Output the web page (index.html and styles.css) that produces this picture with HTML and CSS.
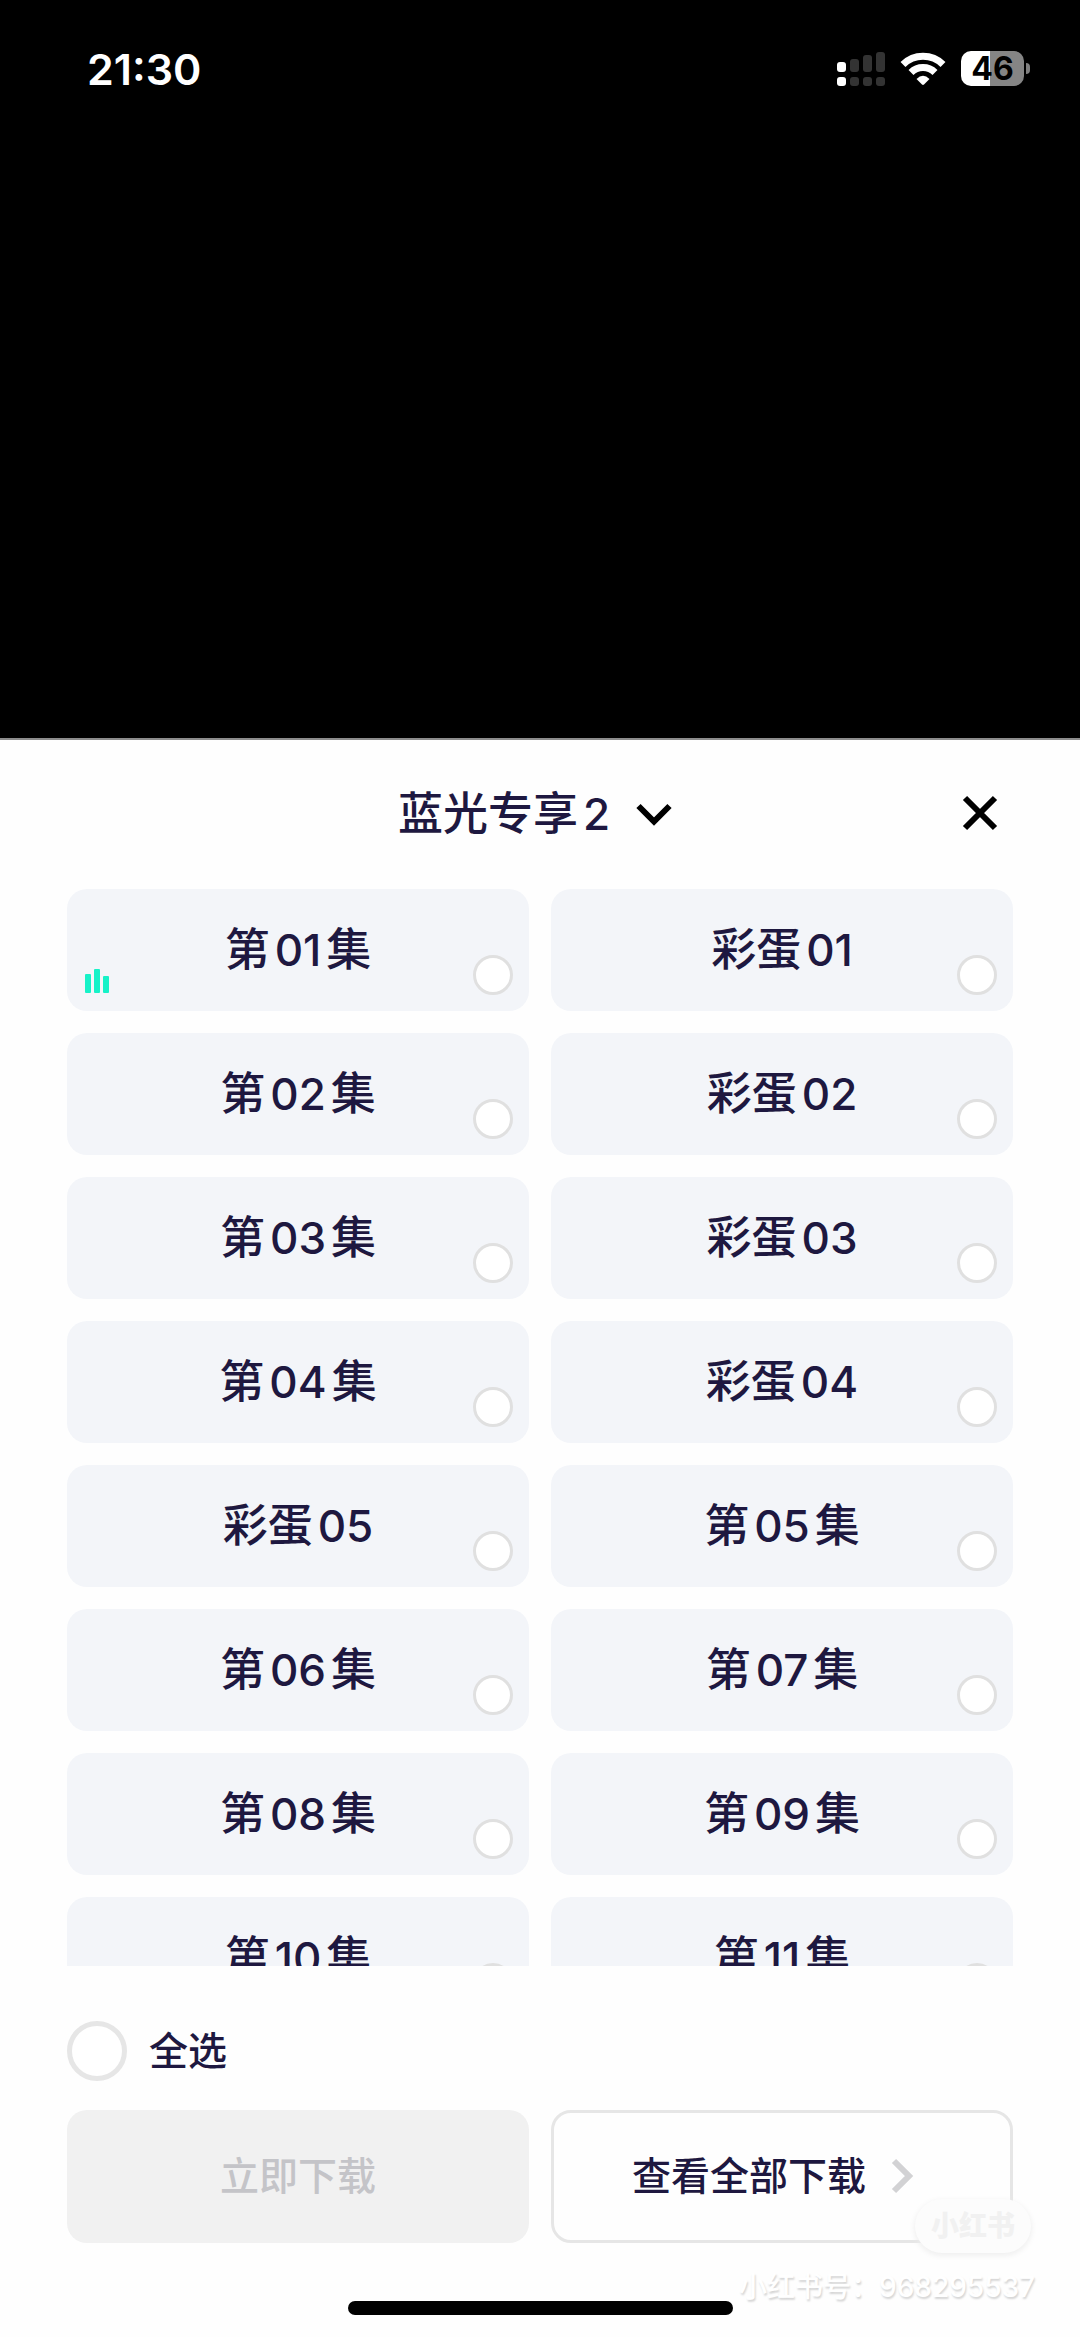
FILE: index.html
```html
<!DOCTYPE html>
<html lang="zh-CN">
<head>
<meta charset="utf-8">
<meta name="viewport" content="width=device-width, initial-scale=1">
<title>下载选集</title>
<link rel="stylesheet" href="styles.css">
</head>
<body>
<header class="status-bar">
  <time class="clock">21:30</time>
  <div class="indicators">
    <svg class="signal" viewBox="0 0 48 36" aria-hidden="true">
      <g fill="#fff"><rect x="0" y="11" width="9" height="10" rx="3"/><rect x="0" y="26" width="9" height="9" rx="3"/></g>
      <g fill="#333"><rect x="13" y="8" width="9" height="13" rx="3"/><rect x="26" y="4" width="9" height="17" rx="3"/><rect x="39" y="1" width="9" height="20" rx="3"/><rect x="13" y="26" width="9" height="9" rx="3"/><rect x="26" y="26" width="9" height="9" rx="3"/><rect x="39" y="26" width="9" height="9" rx="3"/></g>
    </svg>
    <svg class="wifi" viewBox="0 0 46 36" aria-hidden="true">
      <g fill="none" stroke="#fff" stroke-width="7">
        <path d="M3 13.5 A28.500 28.500 0 0 1 43 13.500"/>
        <path d="M11 21.500 A17 17 0 0 1 35 21.500"/>
      </g>
      <path d="M16.500 28 Q23 21.500 29.500 28 L24 33.600 Q23 34.500 22 33.600 Z" fill="#fff"/>
    </svg>
    <div class="battery"><span class="battery-level">46</span></div>
  </div>
</header>
<div class="player"></div>
<main class="sheet">
  <div class="sheet-head">
    <button class="source" type="button">
      <span>蓝光专享<span class="num num-last">2</span></span>
      <svg class="icon" viewBox="0 0 48 48" aria-hidden="true"><path d="M8.500 16 L24 31.500 L39.500 16" fill="none" stroke="#000" stroke-width="6"/></svg>
    </button>
    <button class="close" type="button" aria-label="关闭">
      <svg class="icon" viewBox="0 0 48 48" aria-hidden="true"><path d="M9 8 L39 38 M39 8 L9 38" fill="none" stroke="#000" stroke-width="6"/></svg>
    </button>
  </div>
  <div class="episodes">
    <label class="episode">
      <span>第<span class="num">01</span>集</span>
      <svg class="playing" viewBox="0 0 24 24" aria-hidden="true"><g fill="#16f2c8"><rect x="0" y="5" width="6" height="19" rx="1"/><rect x="9" y="0" width="6" height="24" rx="1"/><rect x="18" y="7" width="6" height="17" rx="1"/></g></svg>
      <input class="check" type="checkbox">
    </label>
    <label class="episode"><span>彩蛋<span class="num num-last">01</span></span><input class="check" type="checkbox"></label>
    <label class="episode"><span>第<span class="num">02</span>集</span><input class="check" type="checkbox"></label>
    <label class="episode"><span>彩蛋<span class="num num-last">02</span></span><input class="check" type="checkbox"></label>
    <label class="episode"><span>第<span class="num">03</span>集</span><input class="check" type="checkbox"></label>
    <label class="episode"><span>彩蛋<span class="num num-last">03</span></span><input class="check" type="checkbox"></label>
    <label class="episode"><span>第<span class="num">04</span>集</span><input class="check" type="checkbox"></label>
    <label class="episode"><span>彩蛋<span class="num num-last">04</span></span><input class="check" type="checkbox"></label>
    <label class="episode"><span>彩蛋<span class="num num-last">05</span></span><input class="check" type="checkbox"></label>
    <label class="episode"><span>第<span class="num">05</span>集</span><input class="check" type="checkbox"></label>
    <label class="episode"><span>第<span class="num">06</span>集</span><input class="check" type="checkbox"></label>
    <label class="episode"><span>第<span class="num">07</span>集</span><input class="check" type="checkbox"></label>
    <label class="episode"><span>第<span class="num">08</span>集</span><input class="check" type="checkbox"></label>
    <label class="episode"><span>第<span class="num">09</span>集</span><input class="check" type="checkbox"></label>
    <label class="episode"><span>第<span class="num">10</span>集</span><input class="check" type="checkbox"></label>
    <label class="episode"><span>第<span class="num">11</span>集</span><input class="check" type="checkbox"></label>
  </div>
  <footer class="actions">
    <label class="select-all"><input class="check check-large" type="checkbox">全选</label>
    <div class="buttons">
      <button class="button button-download" type="button" disabled>立即下载</button>
      <button class="button button-view" type="button">查看全部下载
        <svg class="icon" viewBox="0 0 48 48" aria-hidden="true"><path d="M16 9 L31 24 L16 39" fill="none" stroke="#d2d2d4" stroke-width="6"/></svg>
      </button>
    </div>
    <div class="home-bar"></div>
    <div class="watermark">
      <span class="watermark-logo">小红书</span>
      <span class="watermark-id">小红书号：968295537</span>
    </div>
  </footer>
</main>
</body>
</html>
```
FILE: styles.css
```css
* {
  box-sizing: border-box;
}

body {
  display: flex;
  flex-direction: column;
  height: 100vh;
  margin: 0;
  background: #000;
  color: #1e1840;
  font-family: Inter, "Noto Sans CJK SC", sans-serif;
  font-size: 45px;
  font-weight: 500;
  line-height: 52px;
}

button {
  padding: 0;
  border: 0;
  background: none;
  color: inherit;
  font: inherit;
}

.icon {
  flex: none;
  width: 48px;
  height: 48px;
}

/* Status bar */
.status-bar {
  display: flex;
  flex: none;
  align-items: center;
  justify-content: space-between;
  height: 130px;
  padding: 7px 50px 0 87px;
  color: #fff;
}

.clock {
  font-size: 43px;
  font-weight: 600;
}

.indicators {
  display: flex;
  align-items: center;
  gap: 15px;
}

.signal {
  width: 48px;
  height: 36px;
}

.wifi {
  width: 46px;
  height: 36px;
}

.battery {
  position: relative;
  width: 69px;
  height: 35px;
}

.battery::after {
  content: "";
  position: absolute;
  top: 12px;
  right: 0;
  width: 4px;
  height: 11px;
  border-radius: 0 6px 6px 0;
  background: #808080;
}

.battery-level {
  display: block;
  width: 63px;
  border-radius: 10px;
  background: linear-gradient(90deg, #fff 46%, #858585 46%);
  color: #000;
  font-size: 32px;
  font-weight: 700;
  line-height: 35px;
  text-align: center;
}

.player {
  flex: none;
  aspect-ratio: 16 / 9;
}

/* Download sheet */
.sheet {
  display: flex;
  flex: 1;
  flex-direction: column;
  min-height: 0;
  border-top: 2px solid #8c8c8c;
  background: #fefefe;
}

.sheet-head {
  display: grid;
  flex: none;
  grid-template-columns: 48px 1fr 48px;
  align-items: center;
  height: 149px;
  padding: 0 76px;
}

.source {
  display: flex;
  grid-column: 2;
  align-items: center;
  justify-content: center;
  gap: 20px;
  padding-right: 4px;
}

.close {
  display: flex;
}

/* Digits set apart from the Chinese characters beside them */
.num {
  margin: 0 5px;
  font-size: 44px;
}

.num-last {
  margin-right: 0;
}

.episodes {
  display: grid;
  flex: 1;
  grid-template-columns: 1fr 1fr;
  grid-auto-rows: 122px;
  gap: 22px;
  min-height: 0;
  padding: 0 67px;
  overflow-y: auto;
  scrollbar-width: none;
}

.episode {
  display: flex;
  position: relative;
  align-items: center;
  justify-content: center;
  border-radius: 20px;
  background: #f3f5f9;
}

.playing {
  position: absolute;
  bottom: 18px;
  left: 18px;
  width: 24px;
  height: 24px;
}

.check {
  width: 40px;
  height: 40px;
  margin: 0;
  border: 3px solid #e0e0e0;
  border-radius: 50%;
  background: #fff;
  appearance: none;
}

.episode .check {
  position: absolute;
  right: 16px;
  bottom: 16px;
}

.check:checked {
  background: #16f2c8;
}

.check-large {
  width: 60px;
  height: 60px;
  border-width: 5px;
  border-color: #e6e6e6;
}

/* Footer */
.actions {
  display: flex;
  position: relative;
  flex: none;
  flex-direction: column;
  padding: 55px 67px 22px;
  font-size: 39px;
  line-height: 48px;
}

.select-all {
  display: flex;
  align-items: center;
  align-self: flex-start;
  gap: 22px;
  height: 60px;
}

.buttons {
  display: grid;
  grid-template-columns: 1fr 1fr;
  gap: 22px;
  margin-top: 29px;
}

.button {
  display: flex;
  align-items: center;
  justify-content: center;
  gap: 12px;
  height: 133px;
  padding-bottom: 2px;
  border-radius: 20px;
}

.button-download {
  background: #f1f1f1;
  color: #c4c4c8;
}

.button-view {
  padding-right: 6px;
  border: 3px solid #e6e6e6;
}

.home-bar {
  align-self: center;
  width: 385px;
  height: 14px;
  margin-top: 58px;
  border-radius: 7px;
  background: #000;
}

.watermark {
  display: flex;
  position: absolute;
  right: 45px;
  bottom: 32px;
  flex-direction: column;
  align-items: flex-end;
  gap: 16px;
  pointer-events: none;
}

.watermark-logo {
  width: 116px;
  margin-right: 4px;
  border-radius: 27px;
  background: #fcfcfc;
  box-shadow: 0 2px 6px #ececec;
  color: #f1f1f1;
  font-size: 28px;
  font-weight: 900;
  line-height: 54px;
  text-align: center;
}

.watermark-id {
  color: #fff;
  font-size: 28px;
  line-height: 36px;
  text-shadow: 1px 2px 2px #d4d4d4;
}
```
